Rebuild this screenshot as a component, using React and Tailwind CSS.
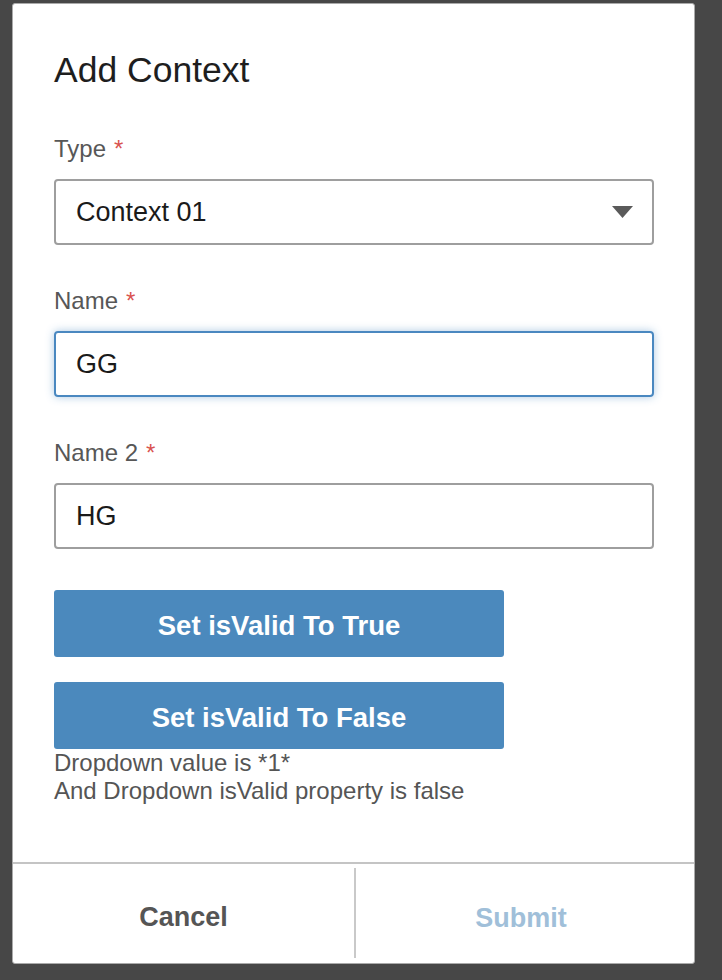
import React, { useState } from 'react';

const Label = ({ children }) => (
  <div className="h-[28px] mb-[16px] text-[24px] leading-[28px] text-[#575757]">
    {children}
    <span className="ml-[8px] text-[#d9534f]">*</span>
  </div>
);

const App = () => {
  const [name, setName] = useState('GG');
  const [name2, setName2] = useState('HG');
  const [valid, setValid] = useState(false);

  return (
    <div
      className="min-h-[980px] bg-[#474747] pl-[12px] pt-[3px]"
      style={{ fontFamily: '"Liberation Sans", Arial, sans-serif' }}
    >
      <div className="w-[683px] h-[961px] bg-white border border-[#aaaaaa] rounded-[3px] flex flex-col overflow-hidden">
        <div className="flex-1 pt-[46px] pl-[41px] pr-[40px]">
          <h2 className="text-[35.5px] leading-[40px] text-[#1e1e1e] font-normal">Add Context</h2>

          <div className="mt-[45px] mb-[42px]">
            <Label>Type</Label>
            <div className="h-[66px] border-2 border-[#9e9e9e] rounded-[4px] flex items-center justify-between pl-[20px] pr-[19px]">
              <span className="text-[27px] text-[#1a1a1a]">Context 01</span>
              <svg width="21" height="12" viewBox="0 0 21 12">
                <path d="M0 0 H21 L10.5 12 Z" fill="#5a5a5a" />
              </svg>
            </div>
          </div>

          <div className="mb-[42px]">
            <Label>Name</Label>
            <input
              value={name}
              onChange={(e) => setName(e.target.value)}
              className="w-full h-[66px] border-2 border-[#4a88c0] rounded-[4px] pl-[20px] text-[27px] text-[#1a1a1a] outline-none shadow-[0_0_9px_rgba(74,136,192,0.45)]"
            />
          </div>

          <div className="mb-[41px]">
            <Label>Name 2</Label>
            <input
              value={name2}
              onChange={(e) => setName2(e.target.value)}
              className="w-full h-[66px] border-2 border-[#9e9e9e] rounded-[4px] pl-[20px] text-[27px] text-[#1a1a1a] outline-none"
            />
          </div>

          <button
            onClick={() => setValid(true)}
            className="block w-[450px] h-[67px] pt-[4px] rounded-[3px] bg-[#4b89bd] text-white text-[27.5px] font-bold"
          >
            Set isValid To True
          </button>
          <button
            onClick={() => setValid(false)}
            className="block mt-[25px] w-[450px] h-[67px] pt-[4px] rounded-[3px] bg-[#4b89bd] text-white text-[27.5px] font-bold"
          >
            Set isValid To False
          </button>
          <div className="text-[24px] leading-[28px] text-[#555555]">
            <div>Dropdown value is *1*</div>
            <div>And Dropdown isValid property is {valid ? 'true' : 'false'}</div>
          </div>
        </div>

        <div className="h-[101px] border-t-2 border-[#c4c4c4] grid grid-cols-[341px_1fr]">
          <button className="pt-[7px] text-[27px] font-bold text-[#555555]">Cancel</button>
          <div className="mt-[4px] mb-[5px] border-l-2 border-[#c9c9c9] flex">
            <button disabled className="flex-1 pt-[10px] pr-[8px] text-[27px] font-bold text-[#a0bfd9]">
              Submit
            </button>
          </div>
        </div>
      </div>
    </div>
  );
};

export default App;
